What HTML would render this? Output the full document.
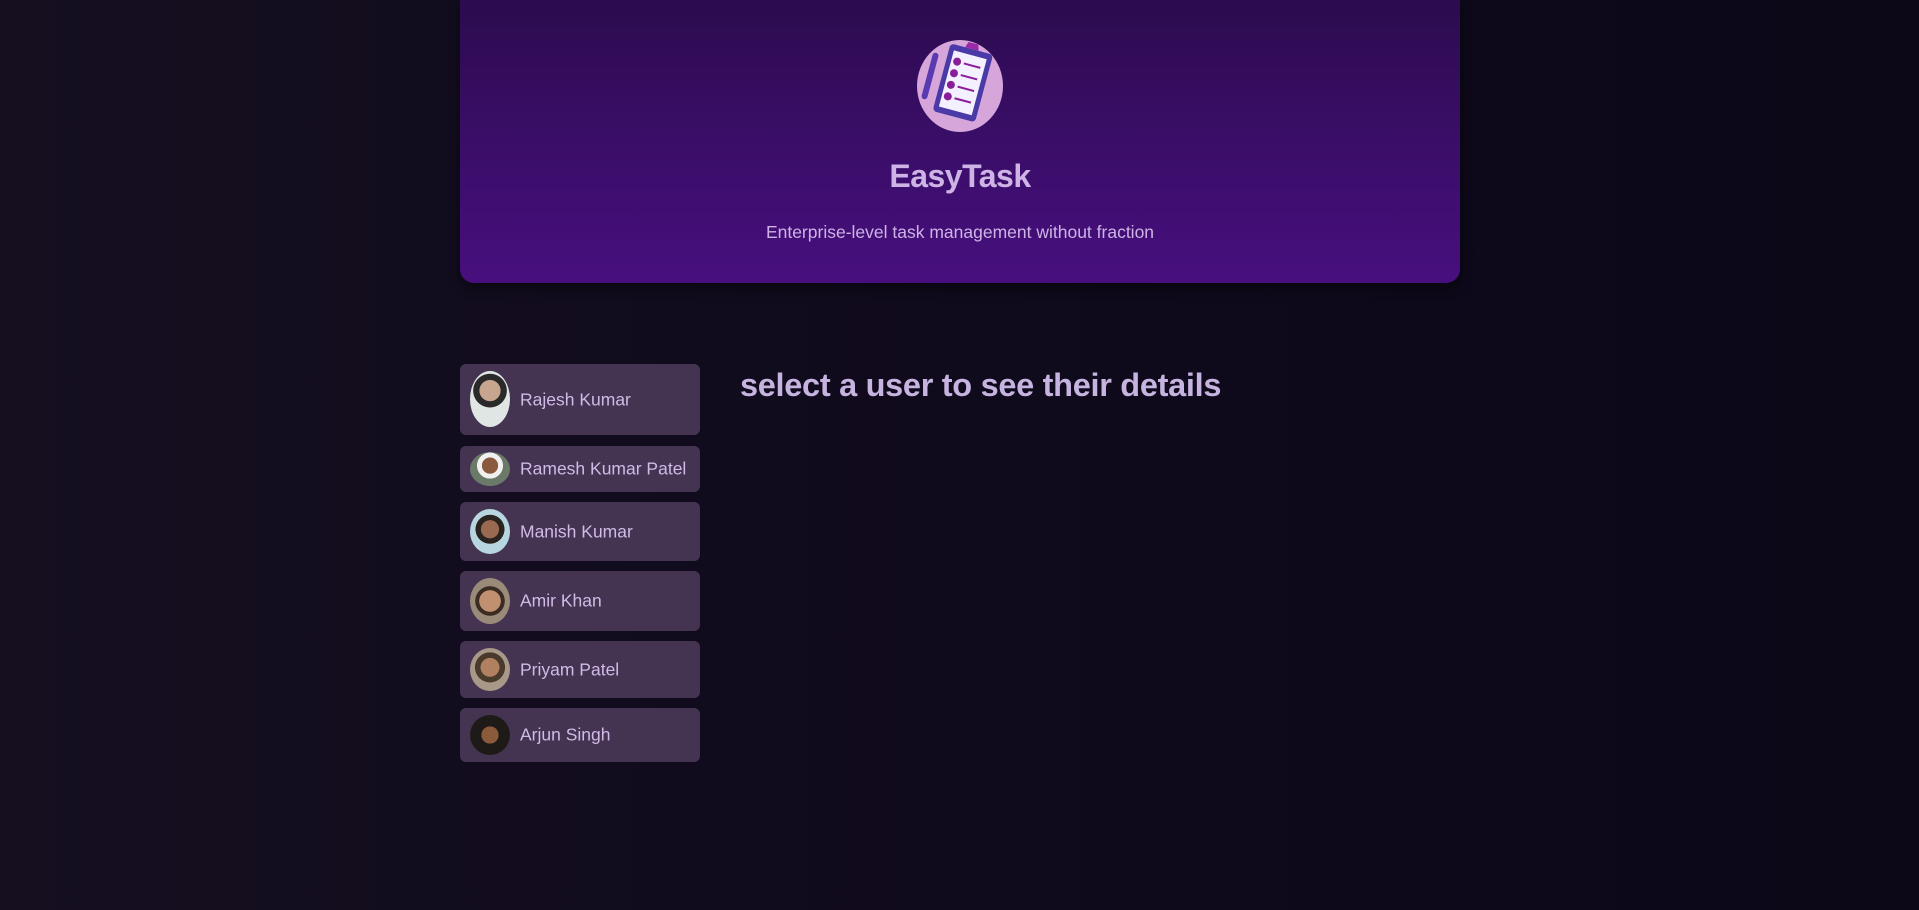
<!DOCTYPE html>
<html><head><meta charset="utf-8"><style>
*{margin:0;padding:0;box-sizing:border-box}
body{width:1919px;height:910px;overflow:hidden;background:linear-gradient(90deg,#150f20 0%,#0f0a1c 50%,#0c0818 100%);font-family:"Liberation Sans",sans-serif;position:relative}
.hdr{position:absolute;left:460px;top:0;width:1000px;height:283px;border-radius:0 0 14px 14px;background:linear-gradient(180deg,#2c0b4f 0%,#3a0e68 50%,#470f7e 100%);box-shadow:0 4px 12px rgba(0,0,0,.5);text-align:center;color:#cdb3e6}
.hdr h1{position:absolute;top:158px;width:100%;font-size:32px;font-weight:bold;letter-spacing:-.5px}
.hdr p{position:absolute;top:222px;width:100%;font-size:17.5px}
.btn{position:absolute;left:460px;width:240px;background:#443452;border-radius:6px;color:#cfbbe6;font-size:17.5px}
.btn span{position:absolute;left:60px;top:50%;transform:translateY(-50%);white-space:nowrap}
.av{position:absolute;left:10px;width:40px;border-radius:50%}
h2{position:absolute;left:740px;top:367px;font-size:32.5px;font-weight:bold;color:#c6b3e0;letter-spacing:-.3px}
</style></head><body>
<div class="hdr">
<svg style="position:absolute;left:455px;top:38px" width="95" height="96" viewBox="0 0 95 96">
<ellipse cx="45" cy="48" rx="43" ry="46" fill="#d6a6da"/>
<g transform="rotate(15 48 48)">
<rect x="25" y="10" width="44" height="70" rx="4" fill="#4a3aa8"/>
<rect x="30" y="16" width="34" height="58" fill="#f3f0ff"/>
<path d="M40 10 h14 l-2 -6 h-10z" fill="#9a2aa8"/>
<circle cx="36" cy="26" r="4" fill="#8a1e9a"/><rect x="43" y="25" width="17" height="2" fill="#8a1e9a"/>
<circle cx="36" cy="38" r="4" fill="#8a1e9a"/><rect x="43" y="37" width="17" height="2" fill="#8a1e9a"/>
<circle cx="36" cy="50" r="4" fill="#8a1e9a"/><rect x="43" y="49" width="17" height="2" fill="#8a1e9a"/>
<circle cx="36" cy="62" r="4" fill="#8a1e9a"/><rect x="43" y="61" width="17" height="2" fill="#8a1e9a"/>
</g>
<rect x="12" y="14" width="6" height="48" rx="3" fill="#5a3ab0" transform="rotate(15 15 38)"/>
</svg>
<h1>EasyTask</h1>
<p>Enterprise-level task management without fraction</p>
</div>
<div class="btn" style="top:364px;height:71px"><div class="av" style="top:7px;height:56px;background:radial-gradient(circle at 50% 35%,#c8a58e 0 25%,#2a2a2a 26% 40%,#dfe6e4 41%)"></div><span>Rajesh Kumar</span></div>
<div class="btn" style="top:446px;height:46px"><div class="av" style="top:6px;height:34px;background:radial-gradient(circle at 50% 40%,#8a5a3e 0 28%,#f0f0f0 29% 45%,#6b7a68 46%)"></div><span>Ramesh Kumar Patel</span></div>
<div class="btn" style="top:502px;height:59px"><div class="av" style="top:7px;height:45px;background:radial-gradient(circle at 50% 45%,#9a6a50 0 28%,#2a2420 29% 45%,#b8d6e0 46%)"></div><span>Manish Kumar</span></div>
<div class="btn" style="top:571px;height:60px"><div class="av" style="top:7px;height:46px;background:radial-gradient(circle at 50% 50%,#c09070 0 35%,#3a2c22 36% 48%,#9a8a78 49%)"></div><span>Amir Khan</span></div>
<div class="btn" style="top:641px;height:57px"><div class="av" style="top:7px;height:43px;background:radial-gradient(circle at 50% 45%,#b08060 0 30%,#4a3a2c 31% 48%,#a89888 49%)"></div><span>Priyam Patel</span></div>
<div class="btn" style="top:708px;height:54px"><div class="av" style="top:7px;height:40px;background:radial-gradient(circle at 50% 50%,#8a5a3a 0 30%,#1e1a18 31%)"></div><span>Arjun Singh</span></div>
<h2>select a user to see their details</h2>
</body></html>
